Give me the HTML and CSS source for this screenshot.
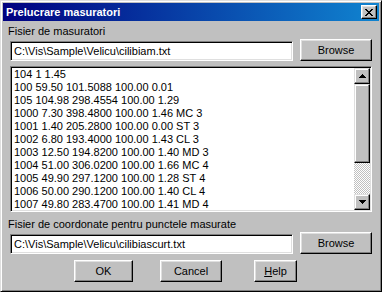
FILE: index.html
```html
<!DOCTYPE html>
<html lang="ro">
<head>
    <meta charset="UTF-8">
    <title>Prelucrare masuratori</title>
    <link rel="stylesheet" href="styles.css">
</head>
<body>
    <div class="window">
        <div class="titlebar">
            <span class="title">Prelucrare masuratori</span>
            <button class="close-btn" aria-label="Close">
                <svg width="8" height="7" viewBox="0 0 8 7" shape-rendering="crispEdges">
                    <path d="M0 0h2v1h-2z M6 0h2v1h-2z M1 1h2v1h-2z M5 1h2v1h-2z M2 2h4v1h-4z M3 3h2v1h-2z M2 4h4v1h-4z M1 5h2v1h-2z M5 5h2v1h-2z M0 6h2v1h-2z M6 6h2v1h-2z" fill="#000"/>
                </svg>
            </button>
        </div>

        <div class="dialog-body">
            <div class="label">Fisier de masuratori</div>
            <div class="file-row">
                <div class="edit">C:\Vis\Sample\Velicu\cilibiam.txt</div>
                <button class="btn browse">Browse</button>
            </div>

            <div class="listbox">
                <div class="list-rows">
                    <div>104 1 1.45</div>
                    <div>100 59.50 101.5088 100.00 0.01</div>
                    <div>105 104.98 298.4554 100.00 1.29</div>
                    <div>1000 7.30 398.4800 100.00 1.46 MC 3</div>
                    <div>1001 1.40 205.2800 100.00 0.00 ST 3</div>
                    <div>1002 6.80 193.4000 100.00 1.43 CL 3</div>
                    <div>1003 12.50 194.8200 100.00 1.40 MD 3</div>
                    <div>1004 51.00 306.0200 100.00 1.66 MC 4</div>
                    <div>1005 49.90 297.1200 100.00 1.28 ST 4</div>
                    <div>1006 50.00 290.1200 100.00 1.40 CL 4</div>
                    <div>1007 49.80 283.4700 100.00 1.41 MD 4</div>
                </div>
                <div class="scrollbar">
                    <div class="scroll-btn">
                        <svg width="7" height="4" viewBox="0 0 7 4" shape-rendering="crispEdges">
                            <path d="M3 0h1v1h-1z M2 1h3v1h-3z M1 2h5v1h-5z M0 3h7v1h-7z" fill="#000"/>
                        </svg>
                    </div>
                    <div class="scroll-thumb"></div>
                    <div class="scroll-track"></div>
                    <div class="scroll-btn">
                        <svg width="7" height="4" viewBox="0 0 7 4" shape-rendering="crispEdges">
                            <path d="M0 0h7v1h-7z M1 1h5v1h-5z M2 2h3v1h-3z M3 3h1v1h-1z" fill="#000"/>
                        </svg>
                    </div>
                </div>
            </div>

            <div class="label label-second">Fisier de coordonate pentru punctele masurate</div>
            <div class="file-row">
                <div class="edit">C:\Vis\Sample\Velicu\cilibiascurt.txt</div>
                <button class="btn browse">Browse</button>
            </div>

            <div class="actions">
                <button class="btn btn-ok">OK</button>
                <button class="btn btn-cancel">Cancel</button>
                <button class="btn btn-help"><u>H</u>elp</button>
            </div>
        </div>
    </div>
</body>
</html>
```

FILE: styles.css
```css
* {
    margin: 0;
    padding: 0;
    box-sizing: border-box;
    font-family: 'Liberation Sans', Arial, sans-serif;
}

body {
    background: #c0c0c0;
    width: 382px;
    height: 292px;
    overflow: hidden;
    font-size: 11px;
    color: #000;
}

/* window frame */
.window {
    width: 382px;
    height: 292px;
    background: #c0c0c0;
    border: 1px solid;
    border-color: #dfdfdf #000 #000 #dfdfdf;
    box-shadow: inset 1px 1px #fff, inset -1px -1px #808080;
    padding: 2px;
    display: flex;
    flex-direction: column;
}

.titlebar {
    height: 18px;
    background: linear-gradient(to right, #000080, #1084d0);
    display: flex;
    align-items: center;
    justify-content: space-between;
    padding: 0 2px 0 3px;
}

.title {
    color: #fff;
    font-weight: 700;
    font-size: 11px;
}

.close-btn {
    width: 16px;
    height: 14px;
    background: #c0c0c0;
    border: 1px solid;
    border-color: #fff #000 #000 #fff;
    box-shadow: inset -1px -1px #808080, inset 1px 1px #dfdfdf;
    display: flex;
    align-items: center;
    justify-content: center;
}

.close-btn svg {
    display: block;
}

.dialog-body {
    padding: 0 7px;
}

.label {
    height: 13px;
    line-height: 13px;
    margin: 4px 0 0 -2px;
    white-space: nowrap;
}

.label-second {
    margin-top: 6px;
}

.file-row {
    display: flex;
    align-items: flex-end;
    gap: 7px;
    margin-top: 1px;
}

.edit {
    width: 283px;
    height: 20px;
    background: #fff;
    border: 1px solid;
    border-color: #808080 #fff #fff #808080;
    box-shadow: inset 1px 1px #000, inset -1px -1px #dfdfdf;
    padding: 1px 3px;
    line-height: 16px;
    white-space: nowrap;
    overflow: hidden;
}

/* push buttons */
.btn {
    height: 22px;
    background: #c0c0c0;
    border: 1px solid;
    border-color: #fff #000 #000 #fff;
    box-shadow: inset -1px -1px #808080, inset 1px 1px #dfdfdf;
    font-size: 11px;
    color: #000;
    display: flex;
    align-items: center;
    justify-content: center;
}

.browse {
    width: 72px;
}

/* measurement list */
.listbox {
    height: 146px;
    margin-top: 5px;
    display: flex;
    background: #fff;
    border: 1px solid;
    border-color: #808080 #fff #fff #808080;
    box-shadow: inset 1px 1px #000, inset -1px -1px #dfdfdf;
    padding: 1px;
}

.list-rows {
    flex: 1;
    padding-left: 2px;
    line-height: 13px;
    white-space: nowrap;
    overflow: hidden;
}

.scrollbar {
    width: 16px;
    display: flex;
    flex-direction: column;
}

.scroll-btn,
.scroll-thumb {
    background: #c0c0c0;
    border: 1px solid;
    border-color: #dfdfdf #000 #000 #dfdfdf;
    box-shadow: inset -1px -1px #808080, inset 1px 1px #fff;
}

.scroll-btn {
    height: 16px;
    display: flex;
    align-items: center;
    justify-content: center;
}

.scroll-btn svg {
    display: block;
}

.scroll-thumb {
    height: 79px;
}

.scroll-track {
    flex: 1;
    background: repeating-conic-gradient(#c0c0c0 0 25%, #fff 0 50%) 0 0 / 2px 2px;
}

.actions {
    display: flex;
    margin-top: 6px;
    padding-left: 64px;
}

.btn-ok {
    width: 59px;
}

.btn-cancel {
    width: 62px;
    margin-left: 27px;
}

.btn-help {
    width: 43px;
    margin-left: 32px;
}
```
